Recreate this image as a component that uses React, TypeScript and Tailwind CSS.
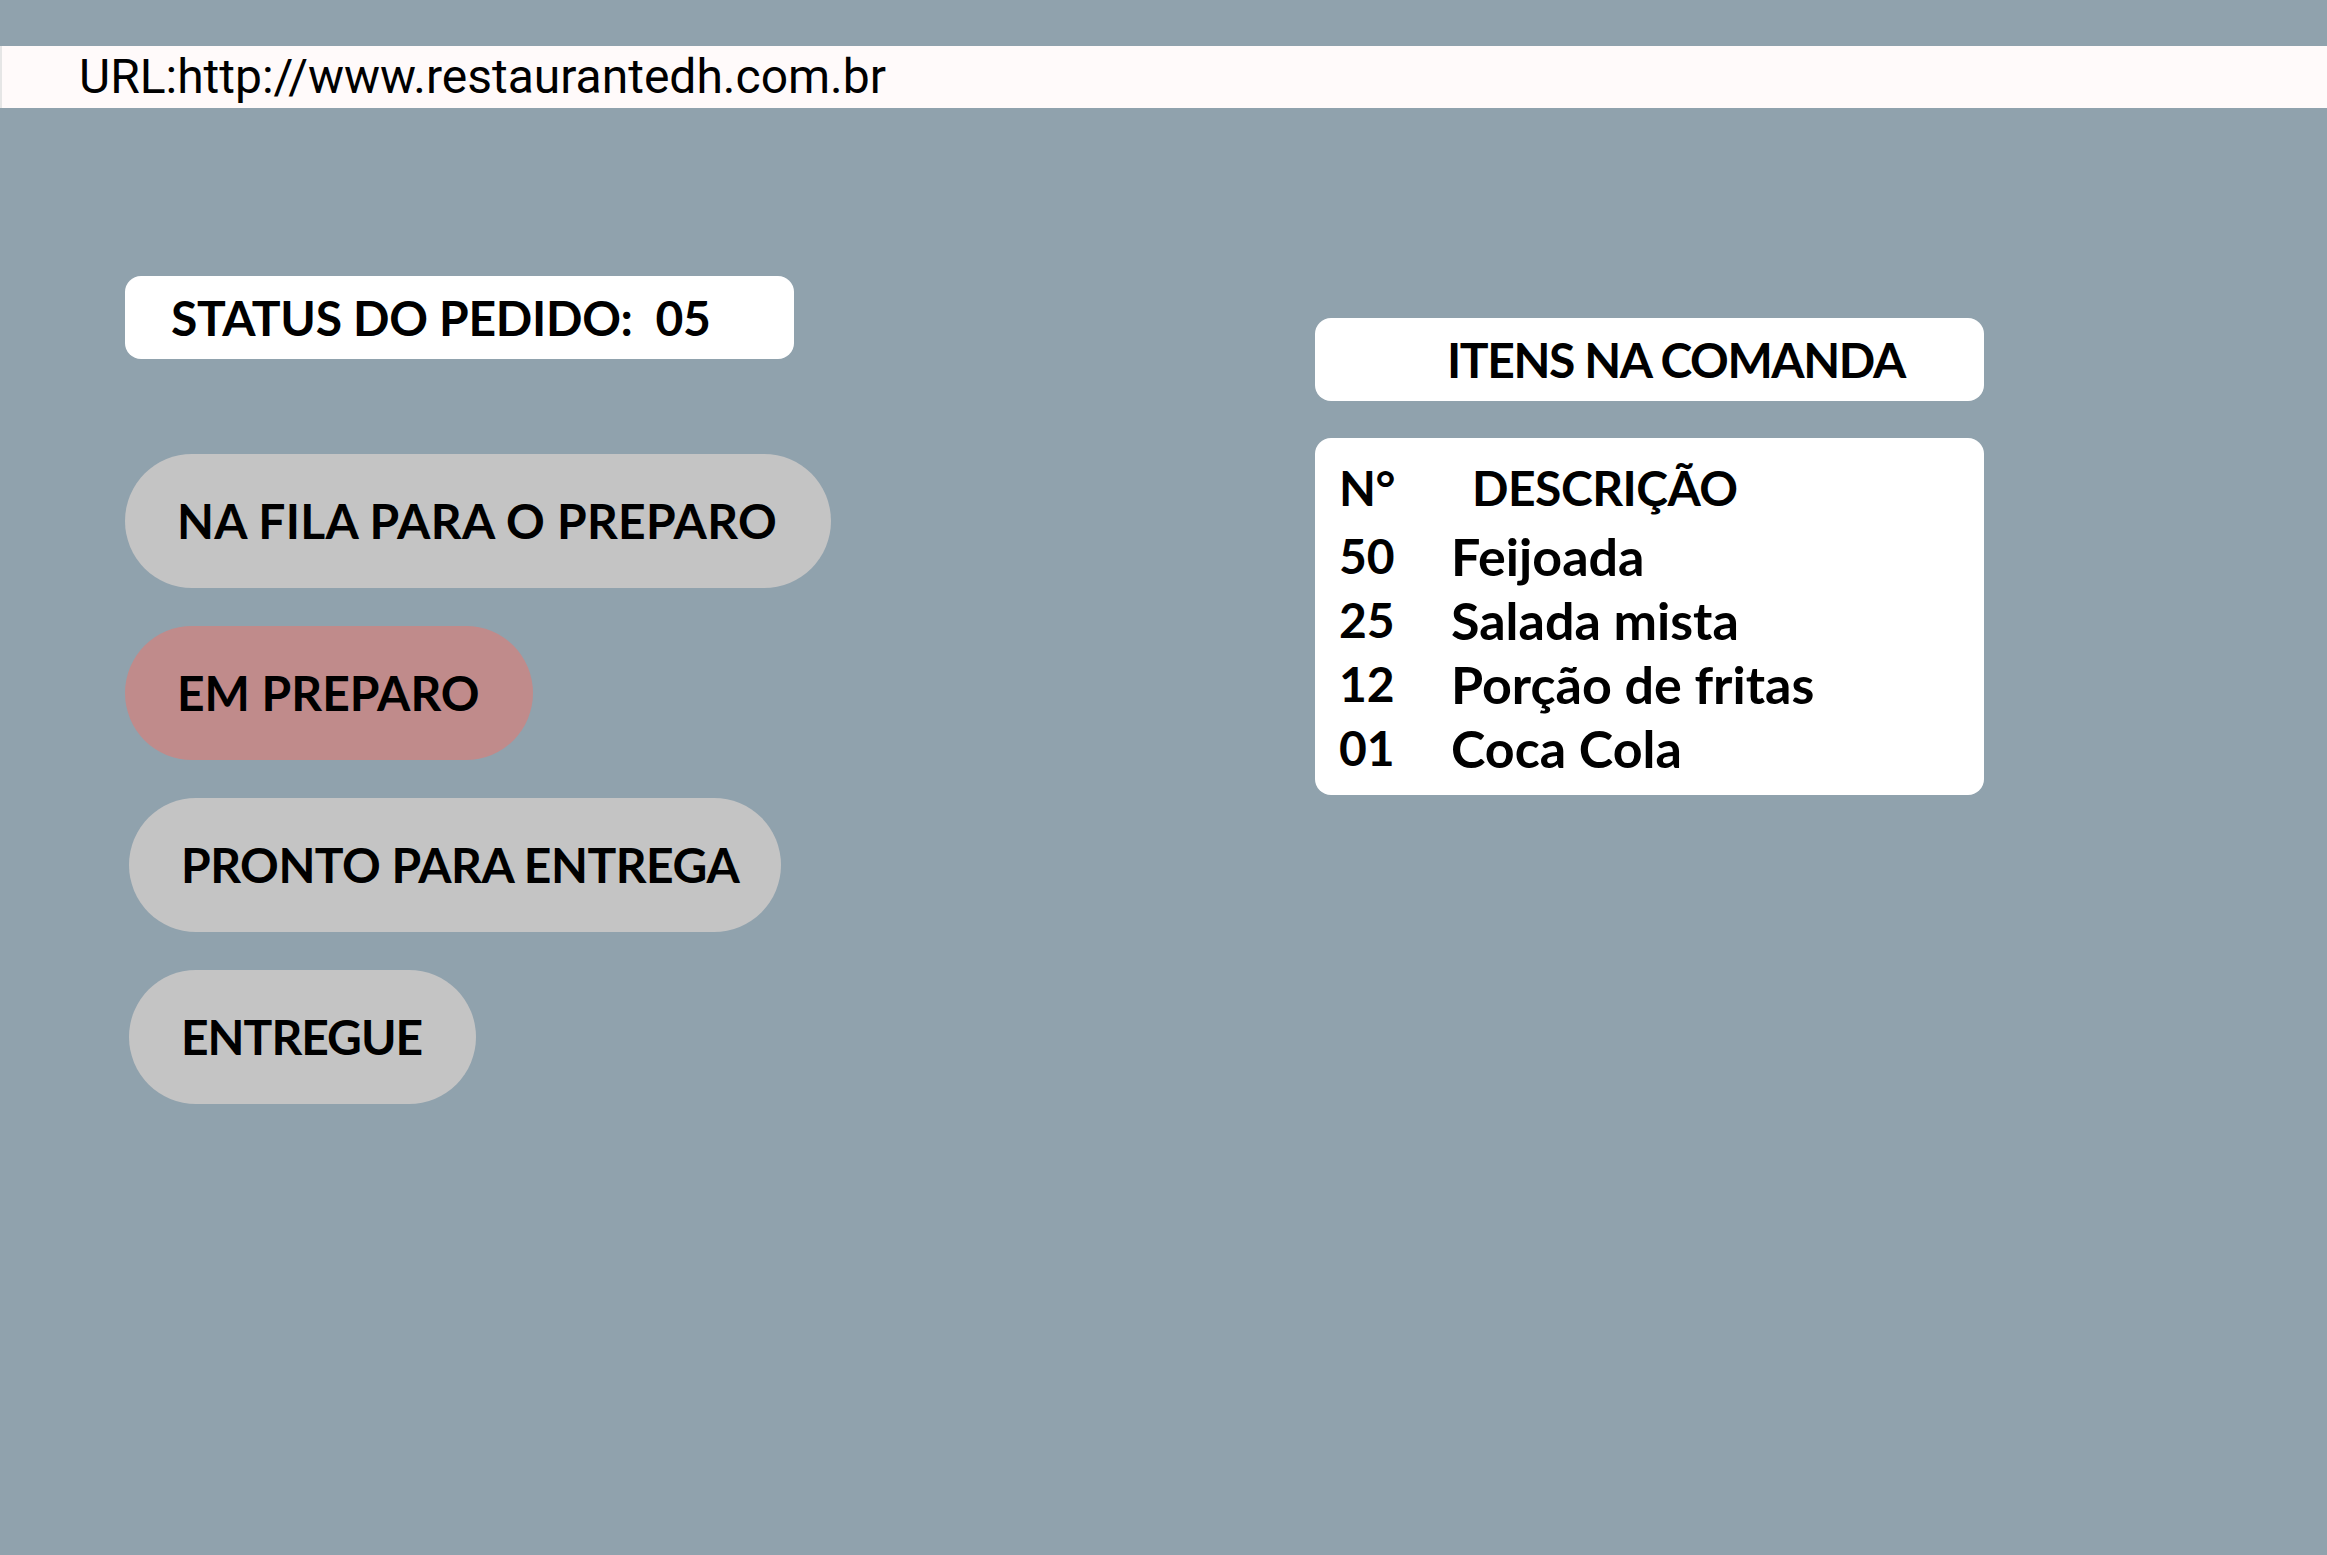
import React from "react";

type Step = {
  label: string;
  width: string;
  tracking: string;
  active?: boolean;
  shifted?: boolean;
};

const steps: Step[] = [
  { label: "NA FILA PARA O PREPARO", width: "w-[706px]", tracking: "tracking-[0.3px]" },
  { label: "EM PREPARO", width: "w-[408px]", tracking: "tracking-[0px]", active: true },
  { label: "PRONTO PARA ENTREGA", width: "w-[652px]", tracking: "tracking-[-0.5px]", shifted: true },
  { label: "ENTREGUE", width: "w-[347px]", tracking: "tracking-[-1px]", shifted: true },
];

const items = [
  { qty: "50", name: "Feijoada" },
  { qty: "25", name: "Salada mista" },
  { qty: "12", name: "Porção de fritas" },
  { qty: "01", name: "Coca Cola" },
];

function StatusPill({ step }: { step: Step }) {
  return (
    <div
      className={`flex h-[134px] items-center rounded-full pl-[52px] ${step.width} ${
        step.active ? "bg-[#c08b8b]" : "bg-[#c4c4c4]"
      } ${step.shifted ? "ml-[4px]" : ""}`}
    >
      <span
        className={`whitespace-nowrap text-[48px] leading-none font-bold text-black ${step.tracking}`}
      >
        {step.label}
      </span>
    </div>
  );
}

export default function App() {
  return (
    <div className="min-h-[1555px] w-full overflow-hidden bg-[#90a2ad] pt-[46px] font-['Lato',sans-serif]">
      <div className="flex h-[62px] items-center border-l-2 border-[#e6e6e6] bg-[#fffafa] pl-[77px]">
        <span className="font-['Roboto',sans-serif] text-[48px] leading-none text-black">
          URL:http://www.restaurantedh.com.br
        </span>
      </div>

      <div className="flex">
        <div className="ml-[125px] flex w-[706px] flex-col pt-[168px]">
          <div className="flex h-[83px] w-[669px] items-center rounded-[16px] bg-white pl-[46px]">
            <span className="whitespace-pre text-[48px] leading-none font-bold tracking-[-0.3px] text-black">
              STATUS DO PEDIDO:  05
            </span>
          </div>

          <div className="mt-[95px] flex flex-col gap-[38px]">
            {steps.map((step) => (
              <StatusPill key={step.label} step={step} />
            ))}
          </div>
        </div>

        <div className="ml-[484px] flex w-[669px] flex-col pt-[210px]">
          <div className="flex h-[83px] items-center rounded-[16px] bg-white pl-[132px]">
            <span className="text-[48px] leading-none font-bold tracking-[-1.4px] text-black">
              ITENS NA COMANDA
            </span>
          </div>

          <div className="mt-[37px] flex h-[357px] flex-col rounded-[16px] bg-white px-[24px] pt-[13px] text-black">
            <div className="flex h-[73px] items-center text-[48px] font-bold tracking-[-0.5px]">
              <span className="w-[133px]">N°</span>
              <span>DESCRIÇÃO</span>
            </div>
            {items.map((item) => (
              <div
                key={item.qty}
                className="flex h-[64px] items-center text-[52px] font-bold"
              >
                <span className="w-[112px] text-[48px]">{item.qty}</span>
                <span>{item.name}</span>
              </div>
            ))}
          </div>
        </div>
      </div>
    </div>
  );
}
